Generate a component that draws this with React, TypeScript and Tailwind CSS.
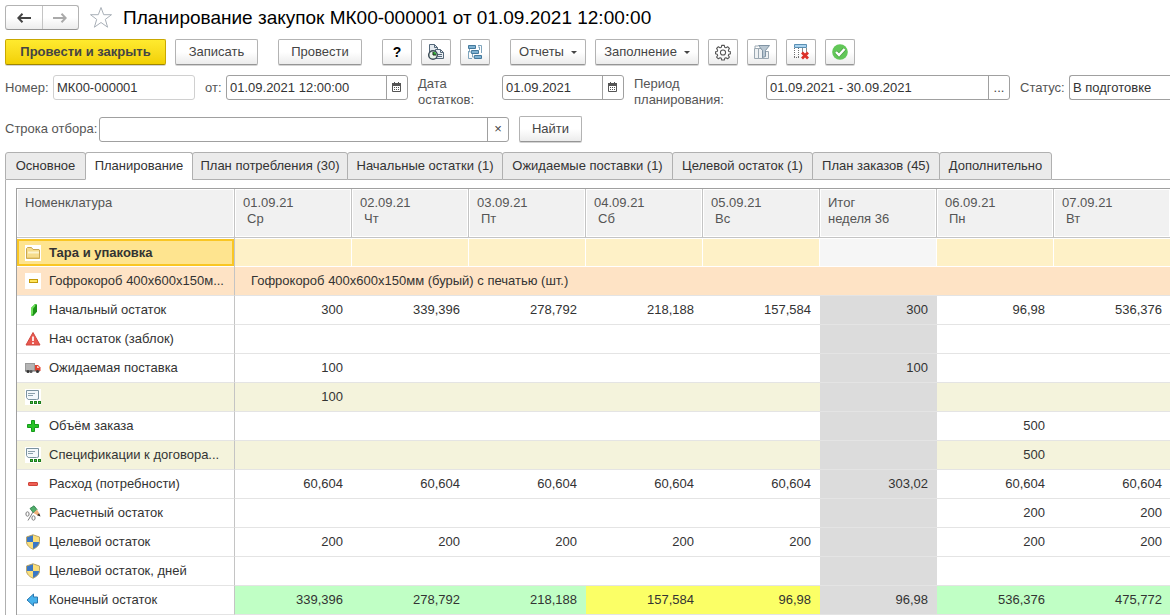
import type { ReactNode } from 'react';
import clsx from 'clsx';

type Row = {
  icon: ReactNode;
  label: string;
  kind?: 'beige' | 'final';
  values: string[];
};

const columns = [
  { top: '01.09.21', bottom: 'Ср' },
  { top: '02.09.21', bottom: 'Чт' },
  { top: '03.09.21', bottom: 'Пт' },
  { top: '04.09.21', bottom: 'Сб' },
  { top: '05.09.21', bottom: 'Вс' },
  { top: 'Итог', bottom: 'неделя 36', total: true },
  { top: '06.09.21', bottom: 'Пн' },
  { top: '07.09.21', bottom: 'Вт' },
];

const tabs = [
  { title: 'Основное', width: 'w-[81px]' },
  { title: 'Планирование', width: 'w-[108px]', active: true },
  { title: 'План потребления (30)', width: 'w-[156px]' },
  { title: 'Начальные остатки (1)', width: 'w-[156px]' },
  { title: 'Ожидаемые поставки (1)', width: 'w-[171px]' },
  { title: 'Целевой остаток (1)', width: 'w-[141px]' },
  { title: 'План заказов (45)', width: 'w-[128px]' },
  { title: 'Дополнительно', width: 'w-[113px]' },
];

/* ---------- icons ---------- */

function FolderIcon() {
  return (
    <svg width="16" height="16" viewBox="0 0 16 16" className="bg-white">
      <path d="M1.5 13.5v-10l1-1h4l1.5 2h6l.5.5v8.5z" fill="#f6dc8c" stroke="#c9a650" />
      <path d="M3 7.500h11" stroke="#fdf3cd" strokeWidth="2" />
      <path d="M2 13h12.5" stroke="#dcb95c" />
    </svg>
  );
}

function ItemIcon() {
  return (
    <svg width="16" height="16" viewBox="0 0 16 16" className="bg-white">
      <rect x="4.5" y="6.5" width="8" height="3" fill="#ffe45c" stroke="#c39a08" />
    </svg>
  );
}

function StockIcon() {
  return (
    <svg width="16" height="16" viewBox="0 0 16 16">
      <path d="M6 6l4-4 2 .5v7l-4 4.500-2-.5z" fill="#35b52b" />
      <path d="M6 6l4-4v7.500l-4 4z" fill="#6fe05b" />
      <path d="M8 6.500l4-4v7l-4 4.500z" fill="#1d9117" />
    </svg>
  );
}

function WarningIcon() {
  return (
    <svg width="16" height="16" viewBox="0 0 16 16">
      <path d="M8 1.500L15 14H1z" fill="#e8574e" stroke="#d0483f" strokeLinejoin="round" />
      <path d="M8 5.500v4.500M8 11.300v1.700" stroke="#fff" strokeWidth="1.700" />
    </svg>
  );
}

function TruckIcon() {
  return (
    <svg width="16" height="16" viewBox="0 0 16 16">
      <rect x="0.5" y="3.5" width="9" height="7" fill="#b4b4b4" stroke="#999" />
      <path d="M10 5h3l2.500 2.500V11H10z" fill="#e0412f" />
      <path d="M12 6h1l1.500 2H12z" fill="#f9cfc8" />
      <path d="M0 11h15" stroke="#666" />
      <circle cx="3" cy="11.500" r="1.500" fill="#333" />
      <circle cx="6" cy="11.500" r="1.500" fill="#555" />
      <circle cx="12.500" cy="11.500" r="1.500" fill="#333" />
    </svg>
  );
}

function SpecIcon() {
  return (
    <svg width="16" height="16" viewBox="0 0 16 16" className="bg-white">
      <path d="M1.5 1.500h12v8.500l-2 .5H3l-1.500-2z" fill="#f3f8fb" stroke="#7a929f" />
      <path d="M3 4.500h7M3 6.500h5M3 10.500h2" stroke="#8ba0ab" />
      <path d="M5 12h3v3H5zM9 12h3v3H9zM13 12h3v3h-3z" fill="#1c7c1c" />
      <path d="M6 13h1v1H6zM10 13h1v1h-1zM14 13h1v1h-1z" fill="#4fc84a" />
    </svg>
  );
}

function PlusIcon() {
  return (
    <svg width="16" height="16" viewBox="0 0 16 16">
      <path d="M6.500 2.500h3v4h4v3h-4v4h-3v-4h-4v-3h4z" fill="#27c427" stroke="#169a1b" />
    </svg>
  );
}

function MinusIcon() {
  return (
    <svg width="16" height="16" viewBox="0 0 16 16">
      <rect x="3.500" y="6.500" width="9" height="3" rx="0.500" fill="#ee5f55" stroke="#cf4238" />
    </svg>
  );
}

function CalcIcon() {
  return (
    <svg width="16" height="16" viewBox="0 0 16 16">
      <path d="M5 3.500L9 .8l3 3.700L8.500 8z" fill="#4fae6a" stroke="#2b7a45" strokeWidth="0.800" />
      <path d="M8.500 8L12 4.500l2.300 4-2 1.700z" fill="#f0b07a" />
      <path d="M12 10.200l2.200-2L15.500 11.500z" fill="#33251a" />
      <g fill="none" stroke="#7a7a7a">
        <ellipse cx="2.500" cy="9" rx="1.600" ry="2.200" />
        <ellipse cx="8.500" cy="13" rx="1.600" ry="2.200" />
        <path d="M8 7L3 15.500" />
      </g>
    </svg>
  );
}

function ShieldIcon() {
  return (
    <svg width="16" height="16" viewBox="0 0 16 16">
      <path d="M8 .8l6.500 2.200v4.500c0 3.800-3 6.200-6.500 7.700-3.500-1.500-6.500-3.900-6.500-7.700V3z" fill="#fbdf7a" />
      <path d="M8 .8V8H1.500V3zM8 8h6.500c-.2 3.500-3.200 5.800-6.500 7.200z" fill="#3a78c6" />
      <path d="M8 .8l6.500 2.200v4.500c0 3.800-3 6.200-6.500 7.700-3.500-1.500-6.500-3.900-6.500-7.700V3z" fill="none" stroke="#b9a468" />
    </svg>
  );
}

function ArrowIcon() {
  return (
    <svg width="16" height="16" viewBox="0 0 16 16">
      <path d="M2 8l6.500-6v3h4v6h-4v3z" fill="#46b2ec" stroke="#2c78b0" strokeLinejoin="round" />
    </svg>
  );
}

function CalendarIcon() {
  return (
    <svg width="10" height="11" viewBox="0 0 10 11">
      <path d="M.5 2.500h8v7h-8z" fill="#fff" stroke="#555" />
      <path d="M0 1h9v3H0zM2 0h1v1H2zM6 0h1v1H6z" fill="#555" />
      <path d="M2 5.500h6M2 7.500h6" stroke="#555" strokeDasharray="1 1" />
    </svg>
  );
}

function ReportClockIcon() {
  return (
    <svg width="18" height="18" viewBox="0 0 18 18">
      <path d="M2.500 9V1.500h5l3 3V8" fill="#e3e9ee" stroke="#54687a" />
      <path d="M7.500 1.500v3h3" fill="none" stroke="#54687a" />
      <path d="M8.500 6.500h5l3 3v6h-8z" fill="#e9eef2" stroke="#54687a" />
      <path d="M13.500 6.500v3h3M11 11.500h4M11 13.500h4" fill="none" stroke="#54687a" />
      <circle cx="6" cy="12" r="4.300" fill="#e9f5e8" stroke="#3d4c58" strokeWidth="1.500" />
      <path d="M6 8.700V12h3.300A3.300 3.300 0 0 0 6 8.700z" fill="#2fb234" />
      <path d="M6 9v3h3" fill="none" stroke="#222" />
    </svg>
  );
}

function StructureIcon() {
  return (
    <svg width="16" height="16" viewBox="0 0 16 16">
      <g fill="#7fb2d2" stroke="#44799c">
        <path d="M1.500 1.500h7v3h-7zM4.500 6.500h7v3h-7zM7.500 11.500h7v3h-7z" />
      </g>
      <path d="M11 1.500h3.500V9M1.500 7v7.500H5M2.500 5v3h2M5.500 10v3h2M11 3h1.500v3" fill="none" stroke="#7fa5bd" />
    </svg>
  );
}

function GearIcon() {
  return (
    <svg width="16" height="17" viewBox="0 0 18 19" fill="none" stroke="#555" strokeWidth="1.200" strokeLinejoin="round">
      <path d="M7.500 1.500h3l.4 2.200 1.400.6 1.900-1.300 2 2-1.200 1.900.6 1.400 2.100.5v2l-2.100.6-.6 1.400 1.200 1.800-2 2-1.900-1.200-1.400.6-.4 2h-3l-.4-2-1.400-.6-1.900 1.200-2-2L3 12.800l-.6-1.400-1.900-.6v-2l1.900-.5L3 6.900 1.800 5l2-2 1.900 1.300 1.400-.6z" />
      <circle cx="9" cy="9.500" r="2.900" />
    </svg>
  );
}

function FilterIcon() {
  return (
    <svg width="18" height="16" viewBox="0 0 18 16">
      <path d="M1.500 4.500h4v10h-4zM5.500 4.500h4v10h-4zM9.500 7.500h6v7h-6z" fill="#eef1f3" stroke="#9aa7b1" />
      <path d="M2 4V2h3" fill="none" stroke="#9aa7b1" />
      <path d="M5.500 1.500h11l-4 5v6l-3 1v-7z" fill="#b9c7d2" stroke="#8194a4" />
    </svg>
  );
}

function TableDeleteIcon() {
  return (
    <svg width="17" height="16" viewBox="0 0 17 16">
      <path d="M1.500.5h12v3h-12z" fill="#a9d2ee" stroke="#5a8fb3" />
      <path d="M1.500 4v9M5.500 4v9" stroke="#707070" strokeDasharray="1 1" />
      <path d="M9.500 4v5M13.500 4v4" stroke="#8a8a8a" />
      <path d="M1 13.500h6" stroke="#707070" strokeDasharray="1 1" />
      <path d="M9 8.500l6 6M15 8.500l-6 6" stroke="#dc3028" strokeWidth="2.800" />
    </svg>
  );
}

function OkIcon() {
  return (
    <svg width="16" height="16" viewBox="0 0 16 16">
      <circle cx="8" cy="8" r="7.800" fill="#62c758" />
      <path d="M4 8l3 3 5.500-6" fill="none" stroke="#4a9d43" strokeWidth="3.800" />
      <path d="M4 8l3 3 5.500-6" fill="none" stroke="#fff" strokeWidth="2.400" />
    </svg>
  );
}

function NavArrow({ back, color }: { back?: boolean; color: string }) {
  return (
    <svg width="14" height="10" viewBox="0 0 14 10" fill="none" stroke={color} strokeWidth="2">
      {back ? <path d="M14 5H2M5.500 .8L1.300 5l4.200 4.200" /> : <path d="M0 5h12M8.500 .8L12.700 5 8.500 9.200" />}
    </svg>
  );
}

/* ---------- data ---------- */

const rows: Row[] = [
  { icon: <StockIcon />, label: 'Начальный остаток', values: ['300', '339,396', '278,792', '218,188', '157,584', '300', '96,98', '536,376'] },
  { icon: <WarningIcon />, label: 'Нач остаток (заблок)', values: ['', '', '', '', '', '', '', ''] },
  { icon: <TruckIcon />, label: 'Ожидаемая поставка', values: ['100', '', '', '', '', '100', '', ''] },
  { icon: <SpecIcon />, label: '', kind: 'beige', values: ['100', '', '', '', '', '', '', ''] },
  { icon: <PlusIcon />, label: 'Объём заказа', values: ['', '', '', '', '', '', '500', ''] },
  { icon: <SpecIcon />, label: 'Спецификации к договора...', kind: 'beige', values: ['', '', '', '', '', '', '500', ''] },
  { icon: <MinusIcon />, label: 'Расход (потребности)', values: ['60,604', '60,604', '60,604', '60,604', '60,604', '303,02', '60,604', '60,604'] },
  { icon: <CalcIcon />, label: 'Расчетный остаток', values: ['', '', '', '', '', '', '200', '200'] },
  { icon: <ShieldIcon />, label: 'Целевой остаток', values: ['200', '200', '200', '200', '200', '', '200', '200'] },
  { icon: <ShieldIcon />, label: 'Целевой остаток, дней', values: ['', '', '', '', '', '', '', ''] },
  { icon: <ArrowIcon />, label: 'Конечный остаток', kind: 'final', values: ['339,396', '278,792', '218,188', '157,584', '96,98', '96,98', '536,376', '475,772'] },
];

// stock below the target level is highlighted in yellow
const TARGET = 200;

function cellColor(row: Row, index: number) {
  if (columns[index].total) return 'bg-[#dcdcdc]';
  if (row.kind === 'beige') return 'bg-[#f4f3dc]';
  if (row.kind === 'final') {
    return parseFloat(row.values[index].replace(',', '.')) < TARGET ? 'bg-[#fbff66]' : 'bg-[#c0ffc5]';
  }
  return 'bg-white';
}

/* ---------- controls ---------- */

const buttonStyle =
  'flex h-[26px] shrink-0 items-center justify-center rounded-[2px] border border-[#b3b3b3] border-b-[#959595] bg-gradient-to-b from-white from-50% to-[#ececec] text-[#444] shadow-[0_1px_0_#d4d4d4]';

function Button({ className, title, children }: { className: string; title?: string; children: ReactNode }) {
  return (
    <button type="button" aria-label={title} className={clsx(buttonStyle, className)}>
      {children}
    </button>
  );
}

function Caret() {
  return <span className="mt-px border-x-[3px] border-t-[3px] border-x-transparent border-t-[#444]" />;
}

function Field({ id, value, className, action, actionLabel }: { id: string; value: string; className: string; action: ReactNode; actionLabel: string }) {
  return (
    <div className={clsx('flex h-[25px] rounded-[3px] border border-[#a0a0a0] bg-white', className)}>
      <input id={id} defaultValue={value} className="w-0 min-w-0 flex-1 px-[3px] text-[#333] outline-none" />
      <button type="button" aria-label={actionLabel} className="flex w-[21px] items-center justify-center border-l border-[#a0a0a0] text-[#444]">
        {action}
      </button>
    </div>
  );
}

export default function App() {
  return (
    <div className="overflow-hidden bg-white pl-[5px] pt-[5px] font-['Liberation_Sans',Arial,sans-serif] text-[13px] leading-4 text-[#333]">
      <header className="flex h-[25px] items-center">
        <div className="flex h-[25px] w-[74px] rounded-[3px] border border-[#b3b3b3] border-b-[#959595] bg-gradient-to-b from-white from-50% to-[#ececec]">
          <button type="button" aria-label="Назад" className="flex flex-1 items-center justify-center">
            <NavArrow back color="#444" />
          </button>
          <button type="button" aria-label="Вперед" className="flex flex-1 items-center justify-center border-l border-[#c4c4c4]">
            <NavArrow color="#aaa" />
          </button>
        </div>
        <button type="button" aria-label="Избранное" className="ml-[10px]">
          <svg width="24" height="23" viewBox="0 0 24 23" fill="#fff" stroke="#a9b0b8">
            <path d="M12 1.500l2.700 7.200h7.800l-6.200 4.700 2.300 7.800-6.600-4.700-6.600 4.700 2.300-7.800-6.200-4.700h7.800z" />
          </svg>
        </button>
        <h1 className="ml-[10px] whitespace-nowrap text-[19px] leading-6 text-black">Планирование закупок МК00-000001 от 01.09.2021 12:00:00</h1>
      </header>

      <div className="mt-[9px] flex gap-5">
        <div className="flex gap-[9px]">
          <button
            type="button"
            className="flex h-[26px] w-[161px] items-center justify-center rounded-[2px] border border-[#c9a800] border-b-[#a08600] bg-gradient-to-b from-[#ffea2e] to-[#f2d000] font-bold text-[#444] shadow-[0_1px_0_#d4d4d4]"
          >
            Провести и закрыть
          </button>
          <Button className="w-[83px]">Записать</Button>
        </div>
        <Button className="w-[84px]">Провести</Button>
        <div className="flex gap-[9px]">
          <Button className="w-[30px] text-sm font-bold text-black">?</Button>
          <Button className="w-[30px]" title="Отчет по времени"><ReportClockIcon /></Button>
          <Button className="w-[30px]" title="Структура"><StructureIcon /></Button>
        </div>
        <div className="flex gap-[9px]">
          <Button className="w-[76px] gap-[7px]">Отчеты <Caret /></Button>
          <Button className="w-[104px] gap-[7px]">Заполнение <Caret /></Button>
          <Button className="w-[30px]" title="Настройки"><GearIcon /></Button>
          <Button className="w-[30px]" title="Отбор"><FilterIcon /></Button>
          <Button className="w-[30px]" title="Очистить таблицу"><TableDeleteIcon /></Button>
          <Button className="w-[30px]" title="Готово"><OkIcon /></Button>
        </div>
      </div>

      <div className="mt-[10px] flex items-start text-[#555]">
        <label htmlFor="number" className="w-12 shrink-0 pt-[5px]">Номер:</label>
        <input id="number" defaultValue="МК00-000001" className="h-[25px] w-[142px] shrink-0 rounded-[3px] border border-[#d0d0d0] px-[3px] text-[#333] outline-none" />
        <label htmlFor="date" className="ml-[10px] w-[21px] shrink-0 pt-[5px]">от:</label>
        <Field id="date" value="01.09.2021 12:00:00" className="w-[182px] shrink-0" actionLabel="Выбрать дату" action={<CalendarIcon />} />
        <label htmlFor="rest-date" className="ml-[10px] w-[84px] shrink-0 pt-px">Дата<br />остатков:</label>
        <Field id="rest-date" value="01.09.2021" className="w-[122px] shrink-0" actionLabel="Выбрать дату остатков" action={<CalendarIcon />} />
        <label htmlFor="period" className="ml-[10px] w-[132px] shrink-0 pt-px">Период<br />планирования:</label>
        <Field id="period" value="01.09.2021 - 30.09.2021" className="w-[244px] shrink-0" actionLabel="Выбрать период" action="..." />
        <label htmlFor="status" className="ml-[10px] w-[49px] shrink-0 pt-[5px]">Статус:</label>
        <select id="status" className="h-[25px] min-w-0 flex-1 appearance-none rounded-l-[3px] border border-r-0 border-[#a0a0a0] bg-white px-[3px] text-[#333] outline-none">
          <option>В подготовке</option>
        </select>
      </div>

      <div className="mt-2 flex items-center">
        <label htmlFor="search" className="w-[94px] shrink-0 text-[#555]">Строка отбора:</label>
        <Field id="search" value="" className="w-[410px]" actionLabel="Очистить" action="×" />
        <Button className="ml-[10px] w-[63px]">Найти</Button>
      </div>

      <nav role="tablist" className="mt-[10px] flex">
        {tabs.map((tab, i) => (
          <button
            key={tab.title}
            type="button"
            role="tab"
            aria-selected={!!tab.active}
            className={clsx(
              'h-7 shrink-0 whitespace-nowrap rounded-t-[3px] border border-[#b0b0b0]',
              tab.width,
              i > 0 && '-ml-px',
              tab.active ? 'border-b-white bg-white' : 'bg-[#ebebeb]'
            )}
          >
            {tab.title}
          </button>
        ))}
        <div className="flex-1 border-b border-[#b0b0b0]" />
      </nav>

      <main className="-mr-px border-l border-[#b0b0b0] pl-[10px] pt-2">
        <table className="w-full table-fixed border-separate border-spacing-0 border-l border-t border-[#a0a0a0]">
          <thead>
            <tr className="h-[49px] text-left align-top text-[#555]">
              <th className="w-[218px] border-b border-r border-[#c4c4c4] bg-[#f1f1f1] px-2 pt-[6px] font-normal shadow-[inset_0_0_0_1px_#fff]">Номенклатура</th>
              {columns.map((col) => (
                <th
                  key={col.top}
                  className="border-b border-r border-[#c4c4c4] bg-[#f1f1f1] px-2 pt-[6px] font-normal shadow-[inset_0_0_0_1px_#fff]"
                >
                  {col.top}
                  <span className={clsx('block', !col.total && 'pl-1')}>{col.bottom}</span>
                </th>
              ))}
            </tr>
          </thead>
          <tbody>
            <tr className="h-[29px]">
              <td className="border-r border-[#c4c4c4] p-0">
                <div className="flex h-[27px] items-center gap-2 border-2 border-[#f9c623] bg-[#fee48f] px-[6px] font-bold">
                  <FolderIcon />
                  Тара и упаковка
                </div>
              </td>
              {columns.map((col) => (
                <td key={col.top} className={clsx('border-y border-r border-white', col.total ? 'bg-[#f6f6f6]' : 'bg-[#fef1c7]')} />
              ))}
            </tr>
            <tr className="h-[29px] bg-[#fee3c5]">
              <td className="border-b border-r border-b-[#e4e4e4] border-r-[#c4c4c4] py-0 pl-2 pr-0">
                <div className="flex items-center gap-2 whitespace-nowrap">
                  <ItemIcon />
                  Гофрокороб 400х600х150м...
                </div>
              </td>
              <td colSpan={8} className="border-b border-[#e4e4e4] py-0 pl-4">Гофрокороб 400х600х150мм (бурый) с печатью (шт.)</td>
            </tr>
            {rows.map((row, r) => (
              <tr key={r} className="h-[29px]">
                <td className={clsx('border-b border-r border-b-[#e4e4e4] border-r-[#c4c4c4] py-0 pl-2 pr-0', row.kind === 'beige' && 'bg-[#f4f3dc]')}>
                  <div className="flex items-center gap-2 whitespace-nowrap">
                    {row.icon}
                    {row.label}
                  </div>
                </td>
                {row.values.map((value, i) => (
                  <td key={i} className={clsx('border-b border-[#e4e4e4] py-0 pr-[9px] text-right', cellColor(row, i))}>
                    {value}
                  </td>
                ))}
              </tr>
            ))}
          </tbody>
        </table>
      </main>
    </div>
  );
}
